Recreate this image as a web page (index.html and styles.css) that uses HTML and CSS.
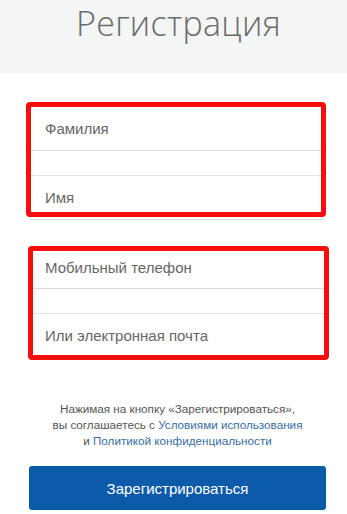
FILE: index.html
```html
<!DOCTYPE html>
<html lang="ru">
<head>
    <meta charset="UTF-8">
    <meta name="viewport" content="width=device-width, initial-scale=1.0">
    <title>Регистрация</title>
    <link rel="stylesheet" href="styles.css">
</head>
<body>
    <div class="page-header">
        <h1>Регистрация</h1>
    </div>

    <form class="register-form">
        <div class="field-box box-name">
            <input class="field field-top" type="text" placeholder="Фамилия">
            <div class="field-gap"></div>
            <input class="field field-bottom" type="text" placeholder="Имя">
        </div>
        <div class="under-line"></div>

        <div class="field-box box-contact">
            <input class="field field-top" type="text" placeholder="Мобильный телефон">
            <div class="field-gap"></div>
            <input class="field field-bottom" type="text" placeholder="Или электронная почта">
        </div>

        <p class="agreement">
            Нажимая на кнопку «Зарегистрироваться»,<br>
            вы соглашаетесь с <a href="#">Условиями использования</a><br>
            и <a href="#">Политикой конфиденциальности</a>
        </p>

        <button type="submit" class="btn-register">Зарегистрироваться</button>
    </form>
</body>
</html>
```

FILE: styles.css
```css
* {
    margin: 0;
    padding: 0;
    box-sizing: border-box;
}

body {
    font-family: 'Liberation Sans', Arial, sans-serif;
    background: #fff;
    color: #555;
}

.page-header {
    background: #f4f5f5;
    height: 73px;
    text-align: center;
    padding-left: 10px;
}

.page-header h1 {
    font-family: 'Open Sans', sans-serif;
    font-weight: 300;
    font-size: 34px;
    line-height: 47px;
    color: #6a6a6a;
    letter-spacing: 0.3px;
}

.register-form {
    display: flex;
    flex-direction: column;
    padding-top: 29px;
}

.field-box {
    border: 5px solid #f60d0d;
    border-radius: 4px;
    display: flex;
    flex-direction: column;
}

.box-name {
    margin-left: 26px;
    width: 300px;
    height: 115px;
}

.box-contact {
    margin-left: 28px;
    width: 301px;
    height: 114px;
}

.field {
    border: none;
    outline: none;
    background: transparent;
    font-family: 'Liberation Sans', Arial, sans-serif;
    font-size: 15px;
    color: #555;
    padding: 0 0 0 14px;
}

.box-contact .field {
    padding-left: 12px;
}

.field::placeholder {
    color: #666;
}

.box-name .field-top {
    height: 44px;
    border-bottom: 1px solid #dcdcdc;
}

.box-contact .field-top {
    height: 38px;
    padding-bottom: 4px;
    border-bottom: 1px solid #dcdcdc;
}

.field-gap {
    height: 25px;
    border-bottom: 1px solid #e2e2e2;
}

.field-bottom {
    flex: 1;
    padding-top: 6px;
}

.box-contact .field-bottom {
    padding-top: 2px;
}

.under-line {
    margin: 2px 22px 26px 30px;
    height: 1px;
    background: #d6e0e2;
}

.agreement {
    margin-top: 41px;
    text-align: center;
    font-size: 11.7px;
    line-height: 16px;
    color: #555;
    padding-left: 8px;
}

.agreement a {
    color: #3a6ea3;
    text-decoration: none;
}

.btn-register {
    margin: 17px 0 0 29px;
    width: 297px;
    height: 44px;
    border: none;
    border-radius: 3px;
    background: #0c5baa;
    color: #fff;
    font-family: 'Liberation Sans', Arial, sans-serif;
    font-size: 15px;
    cursor: pointer;
}
```
